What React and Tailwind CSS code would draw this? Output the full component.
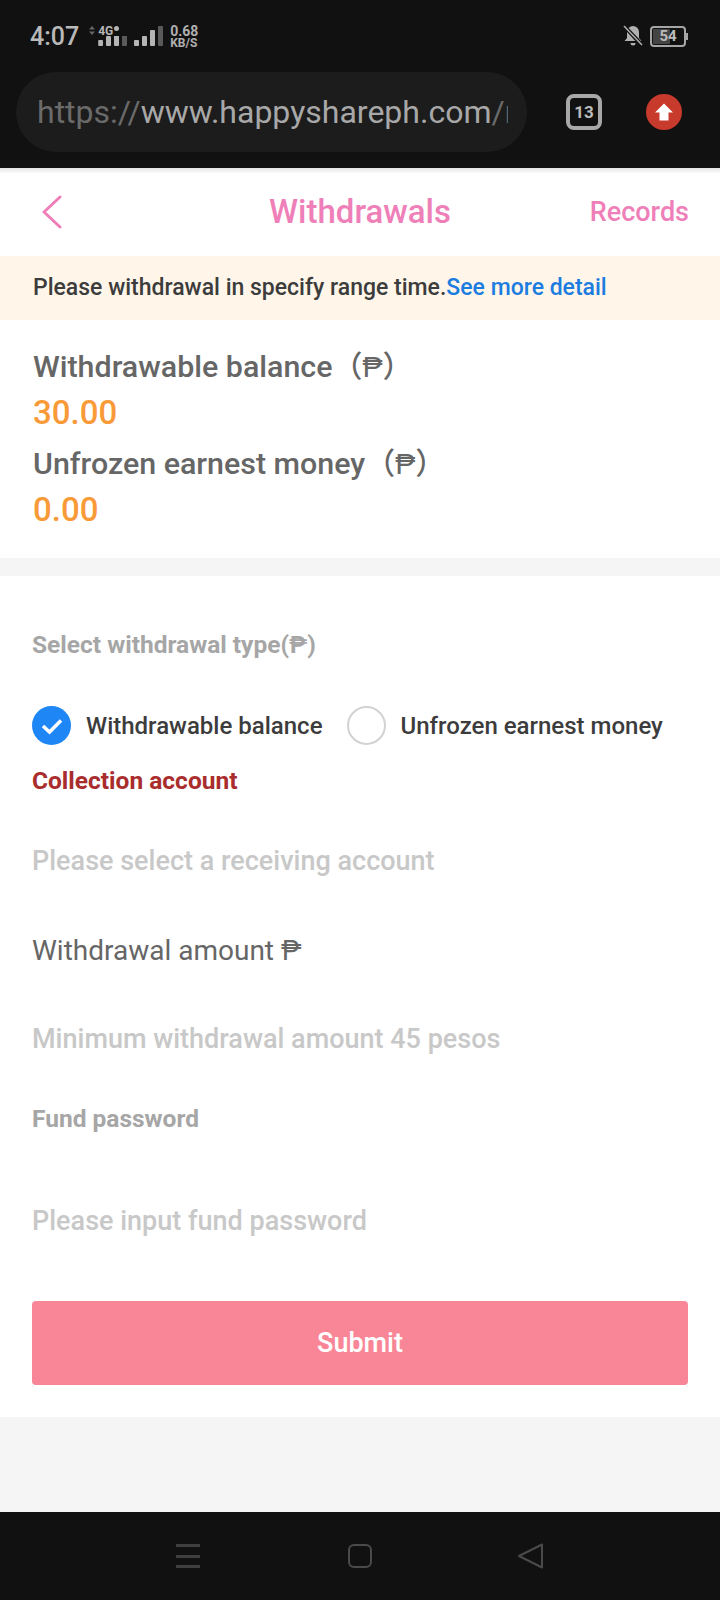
import React from 'react';

const roboto = "font-['Roboto',sans-serif]";

function SignalBars({ className, last = '#5a5a5a' }) {
    return (
        <svg className={className} width="29" height="20" viewBox="0 0 29 20" fill="none">
            <rect x="0" y="14" width="5" height="6" rx="1" fill="#b5b5b5" />
            <rect x="8" y="10" width="5" height="10" rx="1" fill="#b5b5b5" />
            <rect x="16" y="4" width="5" height="16" rx="1" fill="#b5b5b5" />
            <rect x="24" y="0" width="5" height="20" rx="1" fill={last} />
        </svg>
    );
}

function StatusBar() {
    return (
        <div className="flex items-start justify-between pl-[30px] pr-[34px] pt-[24px] h-[72px]">
            <div className="flex items-start">
                <span className="text-[25px] leading-[26px] font-medium text-[#b9b9b9]">4:07</span>
                <div className="relative ml-[10px] w-[38px] h-[22px]">
                    <svg className="absolute left-0 top-[2px]" width="6" height="9" viewBox="0 0 6 9">
                        <path d="M3 0L6 3.500H0ZM3 9L0 5.500H6Z" fill="#666" />
                    </svg>
                    <span className="absolute left-[9px] top-[1px] text-[12px] leading-[12px] font-bold text-[#b5b5b5]">4G</span>
                    <div className="absolute left-[25px] top-[2px] h-[5px] w-[5px] rounded-full bg-[#b5b5b5]" />
                    <SignalBars className="absolute left-[9px] top-[2px] [clip-path:inset(10px_0_0_0)]" />
                </div>
                <SignalBars className="ml-[7px] mt-[2px]" />
                <div className="ml-[7px] mt-[1px] flex flex-col text-[#b0b0b0] font-bold">
                    <span className="text-[14px] leading-[13px]">0.68</span>
                    <span className="text-[12px] leading-[11px]">KB/S</span>
                </div>
            </div>
            <div className="flex items-center mt-[1px]">
                <svg width="20" height="22" viewBox="0 0 20 22">
                    <path d="M10 1a6 6 0 0 1 6 6v6l2.500 3H1.500l2.500-3V7a6 6 0 0 1 6-6z" fill="#b0b0b0" />
                    <path d="M7.500 18h5a2.500 2.500 0 0 1-5 0z" fill="#b0b0b0" />
                    <path d="M1 1l18 19" stroke="#111" strokeWidth="4" />
                    <path d="M1 1l18 19" stroke="#b0b0b0" strokeWidth="1.500" />
                </svg>
                <div className="relative ml-[7px] flex h-[21px] w-[36px] items-center justify-center rounded-[4px] border-2 border-[#a5a5a5]">
                    <div className="absolute left-[1px] top-[1px] bottom-[1px] w-[17px] rounded-[1px] bg-[#444]" />
                    <span className="relative text-[15px] leading-none font-bold text-[#bbb]">54</span>
                    <div className="absolute right-[-4px] top-[5px] h-[7px] w-[2px] bg-[#a5a5a5]" />
                </div>
            </div>
        </div>
    );
}

function AddressBar() {
    return (
        <div className="flex items-start pl-[16px] h-[96px]">
            <div className="flex h-[80px] w-[511px] items-center rounded-[40px] bg-[#1c1c1c] pl-[21px]">
                <div className="w-[471px] overflow-hidden whitespace-nowrap text-[32px] leading-[40px]">
                    <span className="text-[#6a6a6a]">https://</span>
                    <span className="text-[#a8a8a8]">www.happyshareph.com</span>
                    <span className="text-[#6a6a6a]">/m</span>
                </div>
            </div>
            <div className="ml-[39px] mt-[22px] flex h-[36px] w-[36px] items-center justify-center rounded-[8px] border-[4px] border-[#a8a8a8] text-[17px] font-bold leading-none text-[#bcbcbc]">
                13
            </div>
            <div className="ml-[44px] mt-[22px] flex h-[36px] w-[36px] items-center justify-center rounded-full bg-[#c83a2c]">
                <svg width="20" height="20" viewBox="0 0 20 20">
                    <path d="M10 1.500L19 10.500H14.500V18.500H5.500V10.500H1Z" fill="#fff" />
                </svg>
            </div>
        </div>
    );
}

function BalanceRow({ label, value }) {
    return (
        <div className="mb-[3px]">
            <div className="text-[30.4px] leading-[47px] font-medium text-[#666]">
                {label}<span className="font-['Noto_Sans_CJK_SC',sans-serif] text-[30px]">（₱）</span>
            </div>
            <div className="text-[33px] leading-[45px] font-medium text-[#f99a38]">{value}</div>
        </div>
    );
}

function RadioOption({ checked, label }) {
    return (
        <div className="flex items-center">
            {checked ? (
                <div className="flex h-[39px] w-[39px] items-center justify-center rounded-full bg-[#1f86f5]">
                    <svg width="24" height="18" viewBox="0 0 24 18" fill="none">
                        <path d="M3 9l6.500 6L21 3.500" stroke="#fff" strokeWidth="3.500" />
                    </svg>
                </div>
            ) : (
                <div className="h-[39px] w-[39px] rounded-full border-2 border-[#d2d2d2]" />
            )}
            <span className="ml-[15px] text-[24px] font-medium leading-[32px] text-[#3c3c3c]">{label}</span>
        </div>
    );
}

export default function App() {
    return (
        <div className={`${roboto} flex h-[1600px] w-[720px] flex-col overflow-hidden bg-[#f5f5f5]`}>
            {/* phone chrome */}
            <div className="h-[168px] bg-[#111]">
                <StatusBar />
                <AddressBar />
            </div>

            {/* header */}
            <div className="h-[6px] bg-gradient-to-b from-[#e4e4e4] to-white" />
            <div className="grid h-[82px] grid-cols-[1fr_auto_1fr] items-center bg-white px-[31px] pb-[6px]">
                <svg className="ml-[11px]" width="20" height="34" viewBox="0 0 20 34" fill="none">
                    <path d="M18 2L2 17l16 15" stroke="#ef7fb8" strokeWidth="3" strokeLinecap="round" strokeLinejoin="round" />
                </svg>
                <span className="text-[33px] font-medium leading-[40px] text-[#ef7fb8]">Withdrawals</span>
                <span className="text-right text-[27px] font-medium leading-[36px] text-[#ef7fb8]">Records</span>
            </div>

            {/* notice */}
            <div className="flex h-[64px] items-center bg-[#fff6e9] pl-[33px] text-[23px] font-medium text-[#3c3c3c]">
                Please withdrawal in specify range time.<span className="text-[#1c7ce0]">See more detail</span>
            </div>

            {/* balances */}
            <div className="h-[238px] bg-white pl-[33px] pt-[21px]">
                <BalanceRow label="Withdrawable balance" value="30.00" />
                <BalanceRow label="Unfrozen earnest money" value="0.00" />
            </div>

            {/* form */}
            <div className="mt-[18px] flex h-[841px] flex-col bg-white px-[32px]">
                <div className="mt-[53px] text-[24.5px] font-bold leading-[32px] text-[#a6a6a6]">Select withdrawal type(₱)</div>
                <div className="mt-[45px] flex items-center gap-[24px]">
                    <RadioOption checked label="Withdrawable balance" />
                    <RadioOption label="Unfrozen earnest money" />
                </div>
                <div className="mt-[20px] text-[24.5px] font-bold leading-[32px] text-[#a92d2d]">Collection account</div>
                <div className="mt-[46px] text-[27px] font-medium leading-[36px] text-[#c8c8c8]">Please select a receiving account</div>
                <div className="mt-[54px] text-[28px] leading-[36px] text-[#666]">Withdrawal amount ₱</div>
                <div className="mt-[52px] text-[27px] font-medium leading-[36px] text-[#c8c8c8]">Minimum withdrawal amount 45 pesos</div>
                <div className="mt-[46px] text-[24.5px] font-bold leading-[32px] text-[#a6a6a6]">Fund password</div>
                <div className="mt-[68px] text-[27px] font-medium leading-[36px] text-[#c8c8c8]">Please input fund password</div>
                <button className="mt-[62px] flex h-[84px] w-[656px] items-center justify-center rounded-[4px] bg-[#f98696] text-[27px] font-medium text-white">
                    Submit
                </button>
            </div>

            <div className="h-[95px]" />

            {/* nav bar */}
            <div className="flex h-[88px] items-center bg-[#111]">
                <div className="ml-[176px] flex h-[24px] w-[24px] flex-col justify-between">
                    <div className="h-[3px] bg-[#3f3f3f]" />
                    <div className="h-[3px] bg-[#3f3f3f]" />
                    <div className="h-[3px] bg-[#3f3f3f]" />
                </div>
                <div className="ml-[148px] h-[24px] w-[24px] rounded-[6px] border-2 border-[#4a4a4a]" />
                <svg className="ml-[145px]" width="27" height="28" viewBox="0 0 27 28" fill="none">
                    <path d="M25 2.500v23L2 14z" stroke="#4a4a4a" strokeWidth="2" strokeLinejoin="round" />
                </svg>
            </div>
        </div>
    );
}
